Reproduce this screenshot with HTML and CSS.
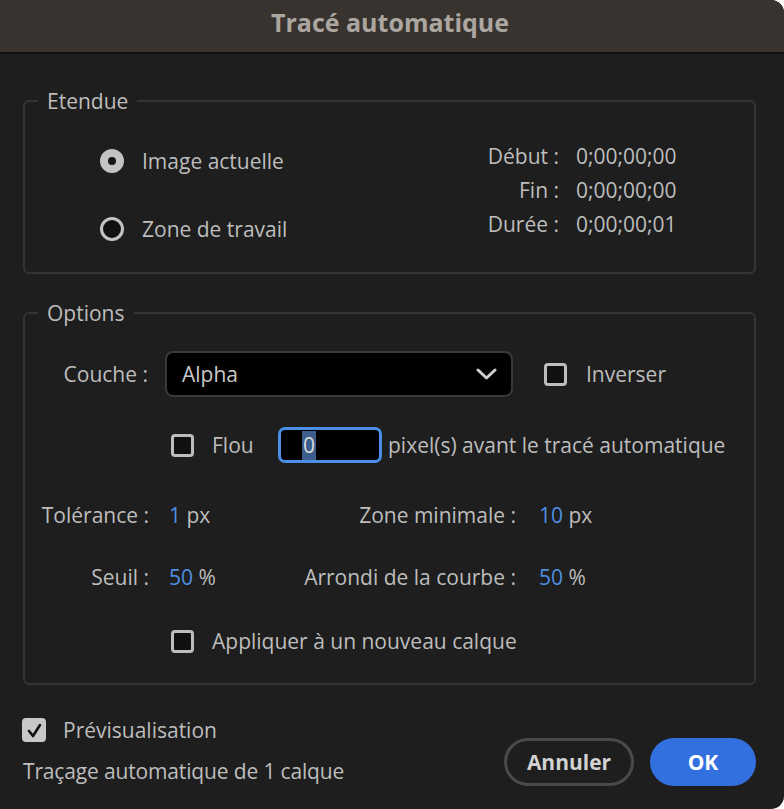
FILE: index.html
```html
<!DOCTYPE html>
<html lang="fr">
<head>
<meta charset="utf-8">
<title>Tracé automatique</title>
<link rel="stylesheet" href="styles.css">
</head>
<body>
<div class="dialog">
  <div class="titlebar">Tracé automatique</div>
  <div class="content">
    <fieldset class="group">
      <legend>Etendue</legend>
      <div class="range">
        <div class="radios">
          <div class="row"><span class="radio on"></span><span class="rlabel">Image actuelle</span></div>
          <div class="row"><span class="radio"></span><span class="rlabel">Zone de travail</span></div>
        </div>
        <div class="times">
          <span class="tl">Début :</span><span class="tv">0;00;00;00</span>
          <span class="tl">Fin :</span><span class="tv">0;00;00;00</span>
          <span class="tl">Durée :</span><span class="tv">0;00;00;01</span>
        </div>
      </div>
    </fieldset>

    <fieldset class="group options">
      <legend>Options</legend>
      <div class="opt-row couche">
        <span class="lbl">Couche :</span>
        <div class="select">
          <span>Alpha</span>
          <svg class="chev" width="21" height="12" viewBox="0 0 21 12"><polyline points="2,2 10.5,10 19,2" fill="none" stroke="#cfcfcf" stroke-width="3" stroke-linecap="round" stroke-linejoin="round"/></svg>
        </div>
        <span class="box inv"></span><span class="chk-label">Inverser</span>
      </div>
      <div class="opt-row flou">
        <span class="box"></span><span class="chk-label flou-label">Flou</span>
        <div class="field"><span class="sel">0</span></div>
        <span class="after">pixel(s) avant le tracé automatique</span>
      </div>
      <div class="params">
        <span class="pl">Tolérance :</span><span class="pv"><b>1</b> px</span>
        <span class="pl2">Zone minimale :</span><span class="pv2"><b>10</b> px</span>
        <span class="pl">Seuil :</span><span class="pv"><b>50</b> %</span>
        <span class="pl2">Arrondi de la courbe :</span><span class="pv2"><b>50</b> %</span>
      </div>
      <div class="opt-row apply">
        <span class="box"></span><span class="chk-label">Appliquer à un nouveau calque</span>
      </div>
    </fieldset>

    <div class="footer">
      <div class="foot-left">
        <div class="preview">
          <span class="box checked"><svg width="17" height="17" viewBox="0 0 17 17"><path d="M3 9 L7 14 L14 3" fill="none" stroke="#111" stroke-width="2.6" stroke-linecap="round" stroke-linejoin="round"/></svg></span>
          <span class="chk-label">Prévisualisation</span>
        </div>
        <div class="status">Traçage automatique de 1 calque</div>
      </div>
      <div class="buttons">
        <button class="btn cancel">Annuler</button>
        <button class="btn ok">OK</button>
      </div>
    </div>
  </div>
</div>
</body>
</html>
```
FILE: styles.css
```css
html, body {
  margin: 0;
  padding: 0;
  background: #ffffff;
}
body {
  font-family: "Open Sans", "Noto Sans", sans-serif;
  font-size: 21px;
  color: #bdbdbd;
}
.dialog {
  width: 784px;
  height: 809px;
  background: #1e1e1e;
  border-radius: 0 13px 13px 0;
  overflow: hidden;
}
.titlebar {
  height: 52px;
  line-height: 44px;
  background: #38332f;
  border-bottom: 2px solid #121212;
  text-align: center;
  font-weight: 700;
  font-size: 25px;
  color: #aca6a1;
  padding-right: 4px;
}
.content {
  padding: 35px 28px 0 23px;
}
.group {
  margin: 0;
  padding: 0;
  border: 2px solid #343434;
  border-radius: 6px;
  min-width: 0;
}
.group legend {
  margin-left: 13px;
  padding: 0 9px;
  line-height: 24px;
  color: #bdbdbd;
}
.range {
  display: flex;
  align-items: flex-start;
  padding: 0 0 26px 75px;
}
.radios {
  width: 324px;
  margin-top: 31px;
  display: flex;
  flex-direction: column;
  gap: 34px;
}
.row {
  display: flex;
  align-items: center;
  height: 34px;
  line-height: 34px;
}
.radio {
  width: 24px;
  height: 24px;
  box-sizing: border-box;
  border-radius: 50%;
  border: 3px solid #c3c3c3;
  background: #111;
  display: flex;
  align-items: center;
  justify-content: center;
  flex: none;
}
.radio.on {
  background: #c3c3c3;
}
.radio.on::after {
  content: "";
  width: 8px;
  height: 8px;
  border-radius: 50%;
  background: #161616;
}
.rlabel {
  margin-left: 18px;
}
.times {
  margin-top: 26px;
  display: grid;
  grid-template-columns: 135px auto;
  column-gap: 17px;
  line-height: 34px;
}
.tl {
  text-align: right;
}
.options {
  margin-top: 27px;
}
.opt-row {
  display: flex;
  align-items: center;
  line-height: 34px;
}
.couche {
  margin-top: 26px;
  height: 46px;
}
.lbl {
  width: 123px;
  text-align: right;
  flex: none;
}
.select {
  margin-left: 17px;
  width: 348px;
  height: 46px;
  box-sizing: border-box;
  background: #000;
  border: 2px solid #393939;
  border-radius: 8px;
  display: flex;
  align-items: center;
  justify-content: space-between;
  padding: 0 14px 0 15px;
  color: #c8c8c8;
}
.chev {
  display: block;
}
.box {
  width: 23px;
  height: 23px;
  box-sizing: border-box;
  border: 3px solid #bdbdbd;
  border-radius: 4px;
  background: #111;
  flex: none;
  display: flex;
  align-items: center;
  justify-content: center;
}
.box.inv {
  margin-left: 31px;
}
.chk-label {
  margin-left: 19px;
}
.flou {
  margin-top: 30px;
  height: 36px;
  padding-left: 146px;
}
.flou .chk-label {
  margin-left: 18px;
  width: 66px;
}
.field {
  width: 104px;
  height: 36px;
  box-sizing: border-box;
  border: 3px solid #4a8ee6;
  border-radius: 7px;
  background: #000;
  padding: 0 0 0 21px;
  display: flex;
  align-items: center;
  flex: none;
}
.sel {
  background: #3d5e8c;
  color: #dcdcdc;
  width: 14px;
  height: 29px;
  line-height: 29px;
  text-align: center;
}
.after {
  margin-left: 6px;
  white-space: nowrap;
}
.params {
  margin-top: 35px;
  display: grid;
  grid-template-columns: 124px 148px 219px auto;
  row-gap: 28px;
  line-height: 34px;
}
.pl, .pl2 {
  text-align: right;
}
.pv {
  padding-left: 20px;
}
.pv2 {
  padding-left: 23px;
}
.params b {
  font-weight: 400;
  color: #4e8fe2;
}
.apply {
  margin-top: 30px;
  padding-left: 146px;
  padding-bottom: 25px;
}
.apply .chk-label {
  margin-left: 18px;
}
.footer {
  display: flex;
  justify-content: space-between;
  align-items: flex-start;
}
.foot-left {
  margin-top: 28px;
}
.preview {
  display: flex;
  align-items: center;
  height: 34px;
  line-height: 34px;
  margin-left: -1px;
}
.preview .chk-label {
  margin-left: 17px;
}
.box.checked {
  width: 24px;
  height: 24px;
  border-color: #c8c8c8;
  background: #c8c8c8;
}
.status {
  margin-top: 7px;
  line-height: 34px;
  letter-spacing: -0.15px;
}
.buttons {
  display: flex;
  gap: 16px;
  margin-top: 53px;
}
.btn {
  font-family: "Open Sans", "Noto Sans", sans-serif;
  font-size: 21px;
  font-weight: 700;
  height: 48px;
  border-radius: 24px;
  box-sizing: border-box;
  padding: 0;
  cursor: default;
}
.cancel {
  width: 130px;
  background: transparent;
  border: 3px solid #4a4a4a;
  color: #d2d2d2;
}
.ok {
  width: 106px;
  background: #3370df;
  border: none;
  color: #ffffff;
}
```
